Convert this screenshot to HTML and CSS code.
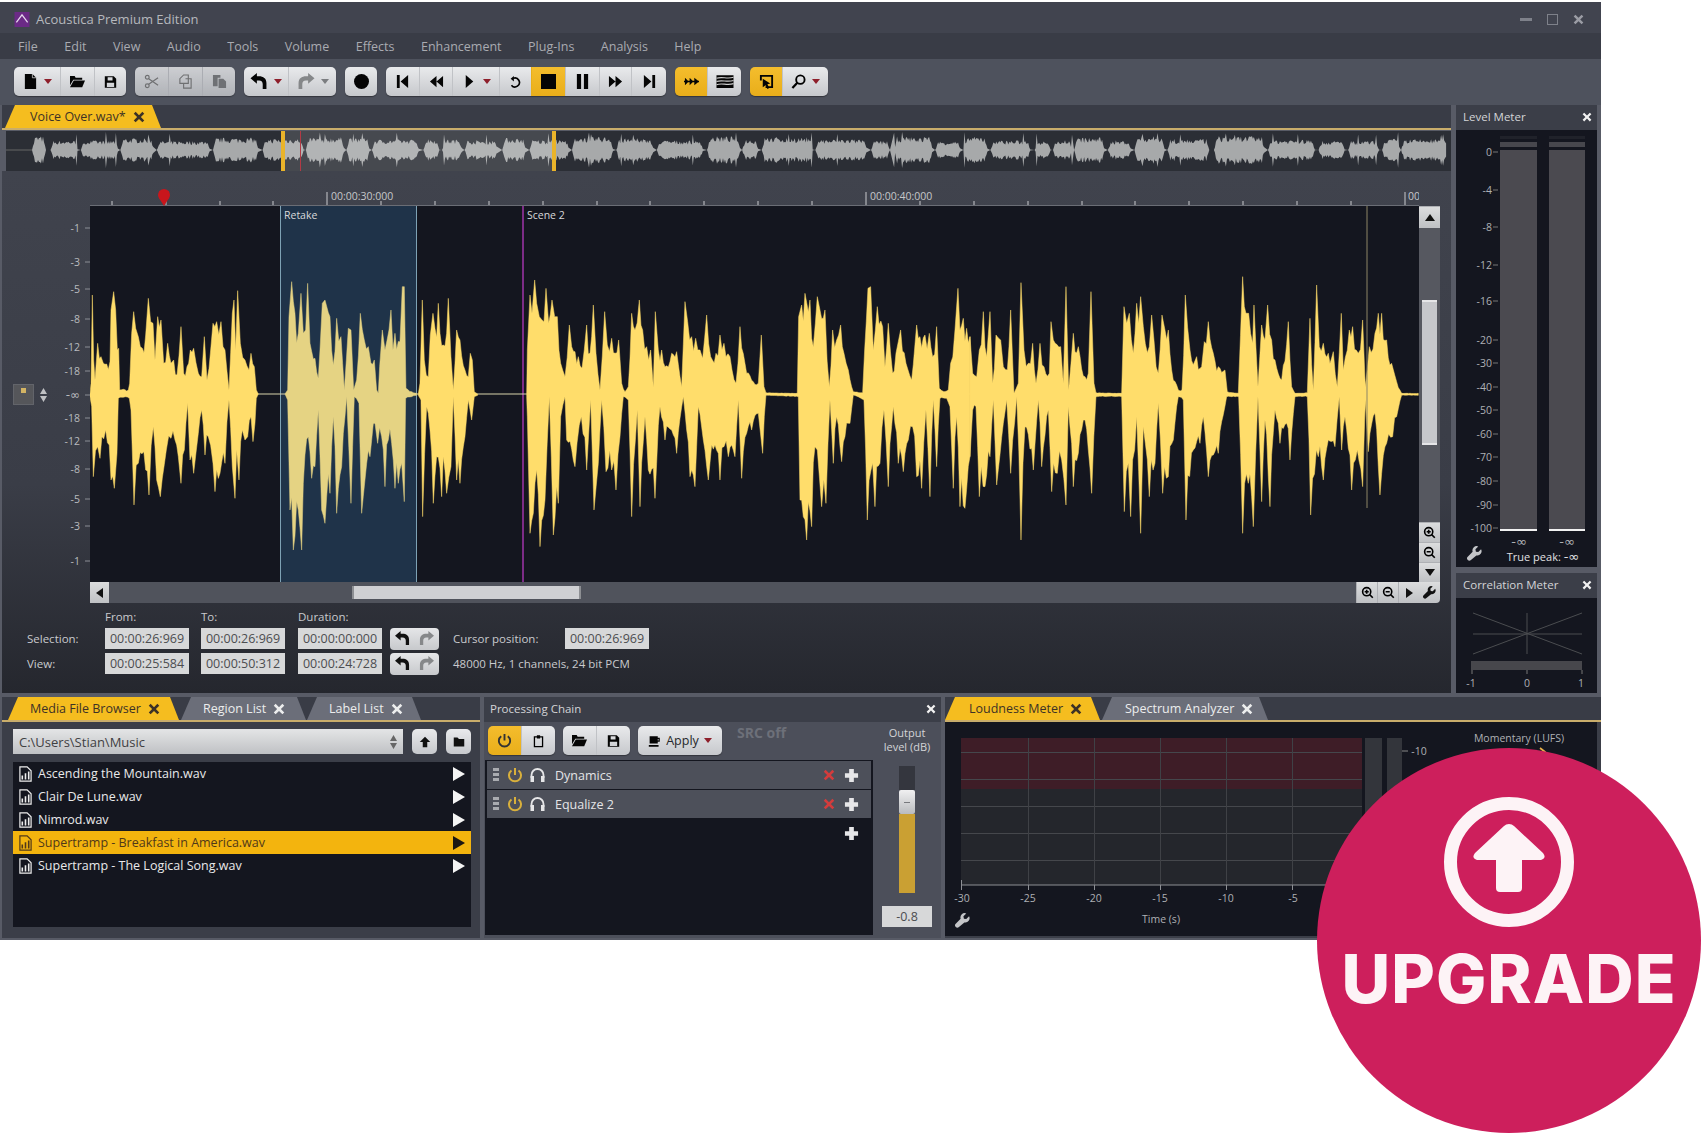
FILE: index.html
```html
<!DOCTYPE html>
<html lang="en">
<head>
  <meta charset="UTF-8">
  <title>Acoustica Premium Edition</title>
  <link rel="stylesheet" href="styles.css">
</head>
<body>

  <!-- icon set -->
  <svg class="defs" width="0" height="0">
    <symbol id="i-new" viewBox="0 0 16 16"><path d="M2 0h8l4 4v12H2z"/><path d="M10 0v4h4" fill="none" stroke="#ddd" stroke-width=".8"/></symbol>
    <symbol id="i-open" viewBox="0 0 16 16"><path d="M0 2h5l1 2h7v2H3.500L0 12z"/><path d="M4 7h12l-3 7H0z"/></symbol>
    <symbol id="i-save" viewBox="0 0 16 16"><path fill-rule="evenodd" d="M1 1h11l3 3v11H1zM4.500 2v4h6V2zM3.500 9v5h9V9z"/></symbol>
    <symbol id="i-cut" viewBox="0 0 16 16"><g fill="none" stroke="currentColor" stroke-width="1.300"><circle cx="3.500" cy="3.500" r="2"/><circle cx="3.500" cy="12.500" r="2"/><path d="M5 5l10 7M5 11l10-7"/></g></symbol>
    <symbol id="i-copy" viewBox="0 0 16 16"><g fill="none" stroke="currentColor" stroke-width="1.200"><path d="M6 1h5v9H2V5z"/><path d="M8 5h6v10H6v-5"/></g></symbol>
    <symbol id="i-paste" viewBox="0 0 16 16"><path d="M1 1h8v3H6v9H1z"/><path d="M7 5h5l3 3v7H7z"/></symbol>
    <symbol id="i-undo" viewBox="0 0 16 16"><path d="M6 0 0 5l6 5V7h2c2.500 0 3.500 1.500 3.500 3.500V15H15V9.500C15 5 12 3 8 3H6z"/></symbol>
    <symbol id="i-redo" viewBox="0 0 16 16"><path d="M10 0l6 5-6 5V7H8C5.500 7 4.500 8.500 4.500 10.500V15H1V9.500C1 5 4 3 8 3h2z"/></symbol>
    <symbol id="i-rec" viewBox="0 0 16 16"><circle cx="8" cy="8" r="8"/></symbol>
    <symbol id="i-start" viewBox="0 0 16 16"><path d="M2 1h3v14H2zM14 1v14L6 8z"/></symbol>
    <symbol id="i-rew" viewBox="0 0 16 16"><path d="M8 2v12L1 8zM15 2v12L8 8z"/></symbol>
    <symbol id="i-play" viewBox="0 0 16 16"><path d="M4 1l8 7-8 7z"/></symbol>
    <symbol id="i-loop" viewBox="0 0 16 16"><path d="M5 3.500A5.500 5.500 0 1 1 3 12" fill="none" stroke="#000" stroke-width="2"/><path d="M2 4l4-3.500v7z"/></symbol>
    <symbol id="i-stop" viewBox="0 0 16 16"><path d="M0 0h16v16H0z"/></symbol>
    <symbol id="i-pause" viewBox="0 0 16 16"><path d="M2 0h4.500v16H2zM9.500 0H14v16H9.500z"/></symbol>
    <symbol id="i-ff" viewBox="0 0 16 16"><path d="M1 2l7 6-7 6zM8 2l7 6-7 6z"/></symbol>
    <symbol id="i-end" viewBox="0 0 16 16"><path d="M2 1l8 7-8 7zM11 1h3v14h-3z"/></symbol>
    <symbol id="i-follow" viewBox="0 0 16 16"><path d="M0 7.300h16v1.400H0zM1 4l4 4-4 4zM6 4l4 4-4 4zM11 4l5 4-5 4z"/></symbol>
    <symbol id="i-wave" viewBox="0 0 16 16"><path d="M0 2h16v12H0z"/><path d="M0 5c5-2 10 1 16-1M0 8c5-2 10 1 16-1M0 11c5-2 10 1 16-1" fill="none" stroke="#ccc" stroke-width="1.100"/></symbol>
    <symbol id="i-select" viewBox="0 0 16 16"><path d="M1 1h14v14H7v-2h6V3H3v4H1z"/><path d="M4 5l8 5-3 1 2 4-2 1-2-4-3 2z"/></symbol>
    <symbol id="i-find" viewBox="0 0 16 16"><circle cx="10" cy="6" r="4.500" fill="none" stroke="#000" stroke-width="2"/><path d="M7 9l-5.500 6" stroke="#000" stroke-width="2.400"/></symbol>
    <symbol id="i-power" viewBox="0 0 16 16"><path d="M4.500 3.500a6 6 0 1 0 7 0" fill="none" stroke="currentColor" stroke-width="2"/><path d="M8 1v7" stroke="currentColor" stroke-width="2"/></symbol>
    <symbol id="i-clip" viewBox="0 0 16 16"><path d="M3 3h10v12H3z" fill="none" stroke="#000" stroke-width="1.600"/><path d="M6 1h4v4H6z"/></symbol>
    <symbol id="i-cup" viewBox="0 0 16 16"><path d="M2 2h10v2h2.500v5H12v2H2zM12 5.500v2h1v-2zM1 13h12v2H1z"/></symbol>
    <symbol id="i-phones" viewBox="0 0 16 16"><path d="M2 11V8a6 6 0 0 1 12 0v3" fill="none" stroke="currentColor" stroke-width="1.800"/><path d="M1 9h3.500v6H1zM11.500 9H15v6h-3.500z" fill="currentColor"/></symbol>
    <symbol id="i-wrench" viewBox="0 0 16 16"><path d="M15 3.500l-3 3-2.500-.5L9 3.500l3-3A4.500 4.500 0 0 0 6 6L.8 11.500a2.300 2.300 0 0 0 3.400 3.400L10 10a4.500 4.500 0 0 0 5-6.500z"/></symbol>
    <symbol id="i-zoomin" viewBox="0 0 16 16"><circle cx="7" cy="7" r="5" fill="none" stroke="#000" stroke-width="2"/><path d="M4.500 7h5M7 4.500v5M10.500 10.500l4 4" stroke="#000" stroke-width="2"/></symbol>
    <symbol id="i-zoomout" viewBox="0 0 16 16"><circle cx="7" cy="7" r="5" fill="none" stroke="#000" stroke-width="2"/><path d="M4.500 7h5M10.500 10.500l4 4" stroke="#000" stroke-width="2"/></symbol>
    <symbol id="i-up" viewBox="0 0 16 16"><path d="M8 1l7 7h-4v7H5V8H1z"/></symbol>
    <symbol id="i-folder" viewBox="0 0 16 16"><path d="M1 2h5l2 2h7v10H1z"/></symbol>
    <symbol id="i-updown" viewBox="0 0 7 14"><path d="M3.500 0 7 6H0zM0 8h7l-3.500 6z"/></symbol>
    <symbol id="i-x" viewBox="0 0 16 16"><path d="M1 3.500 3.500 1 8 5.500 12.500 1 15 3.500 10.500 8l4.500 4.500-2.500 2.500L8 10.500 3.500 15 1 12.500 5.500 8z"/></symbol>
    <symbol id="i-plus" viewBox="0 0 16 16"><path d="M5.500 1h5v4.500H15v5h-4.500V15h-5v-4.500H1v-5h4.500z"/></symbol>
    <symbol id="i-file" viewBox="0 0 16 20"><path d="M1 1h9l5 5v13H1z" fill="none" stroke="currentColor" stroke-width="1.500"/><path d="M3 12h2v5H3zM7 9h2v8H7zM11 7h2v10h-2z" fill="currentColor"/></symbol>
  </svg>

  <div class="window">

    <div class="titlebar">
      <svg class="logo" viewBox="0 0 16 16"><path d="M0 0h16v16H0z" fill="#6b2a86"/><path d="M2 11 8 3l6 8" fill="none" stroke="#e6d9ee" stroke-width="1.300"/></svg>
      <span class="app-name">Acoustica Premium Edition</span>
      <div class="window-btns">
        <span class="win-min"></span>
        <span class="win-max"></span>
        <svg class="win-close"><use href="#i-x"/></svg>
      </div>
    </div>

    <div class="menubar">
      <span>File</span><span>Edit</span><span>View</span><span>Audio</span><span>Tools</span><span>Volume</span><span>Effects</span><span>Enhancement</span><span>Plug-Ins</span><span>Analysis</span><span>Help</span>
    </div>

    <div class="toolbar">
      <div class="btn-group">
        <div class="tb w46"><svg class="ic"><use href="#i-new"/></svg><i class="drop"></i></div>
        <div class="tb w34"><svg class="ic"><use href="#i-open"/></svg></div>
        <div class="tb w32"><svg class="ic ic-sm"><use href="#i-save"/></svg></div>
      </div>
      <div class="btn-group off">
        <div class="tb w33"><svg class="ic"><use href="#i-cut"/></svg></div>
        <div class="tb w34"><svg class="ic"><use href="#i-copy"/></svg></div>
        <div class="tb w33"><svg class="ic"><use href="#i-paste"/></svg></div>
      </div>
      <div class="btn-group">
        <div class="tb w44"><svg class="ic ic-lg"><use href="#i-undo"/></svg><i class="drop"></i></div>
        <div class="tb w48 grey"><svg class="ic ic-lg"><use href="#i-redo"/></svg><i class="drop"></i></div>
      </div>
      <div class="btn-group">
        <div class="tb w32"><svg class="ic"><use href="#i-rec"/></svg></div>
      </div>
      <div class="btn-group">
        <div class="tb w33"><svg class="ic"><use href="#i-start"/></svg></div>
        <div class="tb w33"><svg class="ic"><use href="#i-rew"/></svg></div>
        <div class="tb w47"><svg class="ic"><use href="#i-play"/></svg><i class="drop"></i></div>
        <div class="tb w32"><svg class="ic ic-sm"><use href="#i-loop"/></svg></div>
        <div class="tb w34 on"><svg class="ic"><use href="#i-stop"/></svg></div>
        <div class="tb w34"><svg class="ic"><use href="#i-pause"/></svg></div>
        <div class="tb w32"><svg class="ic"><use href="#i-ff"/></svg></div>
        <div class="tb w35"><svg class="ic"><use href="#i-end"/></svg></div>
      </div>
      <div class="btn-group">
        <div class="tb w32 on"><svg class="ic"><use href="#i-follow"/></svg></div>
        <div class="tb w34"><svg class="ic ic-lg"><use href="#i-wave"/></svg></div>
      </div>
      <div class="btn-group">
        <div class="tb w32 on"><svg class="ic"><use href="#i-select"/></svg></div>
        <div class="tb w46"><svg class="ic"><use href="#i-find"/></svg><i class="drop"></i></div>
      </div>
    </div>

    <div class="workspace">
      <div class="main">
        <div class="tabrow">
          <div class="tab active tab-voice">Voice Over.wav* <svg class="tab-x"><use href="#i-x"/></svg></div>
        </div>

        <svg class="overview" viewBox="6 131 1445 40">
          <path d="M6 150h26" stroke="#666" fill="none"/>
          <path id="overview-wave" fill="#a7a9aa"/>
          <rect x="284" y="131" width="270" height="40" fill="#fff" opacity=".13"/>
          <rect x="300" y="131" width="1" height="40" fill="#b23a45"/>
          <rect x="281" y="131" width="4" height="40" fill="#eab42a"/>
          <rect x="552" y="131" width="4" height="40" fill="#eab42a"/>
        </svg>

        <div class="editor">
          <div class="editor-grid">
            <div class="corner-top"></div>
            <svg class="ruler" viewBox="90 171 1329 35">
              <path d="M112 201v5M166 201v5M220 201v5M273 201v5M327 192v14M381 201v5M435 201v5M489 201v5M543 201v5M597 201v5M650 201v5M704 201v5M758 201v5M812 201v5M866 192v14M920 201v5M974 201v5M1028 201v5M1082 201v5M1135 201v5M1189 201v5M1243 201v5M1297 201v5M1351 201v5M1405 192v14" stroke="#c9cace" fill="none"/>
              <path d="M90 205.500h1329" stroke="#6a6d75"/>
              <path d="M159 191h10v7l-5 8-5-8z" fill="#c8161c"/>
              <circle cx="164" cy="195" r="6" fill="#c8161c"/>
              <text x="331" y="200">00:00:30:000</text>
              <text x="870" y="200">00:00:40:000</text>
              <text x="1408" y="200">00</text>
            </svg>
            <div class="corner-top"></div>

            <div class="axis">
              <div class="channel-tools">
                <span class="channel-box"><i></i></span>
                <svg class="channel-arrows"><use href="#i-updown"/></svg>
              </div>
              <svg class="axis-labels" viewBox="2 206 88 376">
                <path d="M85 228h5M85 262h5M85 289h5M85 319h5M85 347h5M85 371h5M85 395h5M85 418h5M85 441h5M85 469h5M85 499h5M85 526h5M85 561h5" stroke="#8b8e95"/>
                <text x="80" y="232">-1</text>
                <text x="80" y="266">-3</text>
                <text x="80" y="293">-5</text>
                <text x="80" y="323">-8</text>
                <text x="80" y="351">-12</text>
                <text x="80" y="375">-18</text>
                <text class="inf" x="80" y="399">-∞</text>
                <text x="80" y="422">-18</text>
                <text x="80" y="445">-12</text>
                <text x="80" y="473">-8</text>
                <text x="80" y="503">-5</text>
                <text x="80" y="530">-3</text>
                <text x="80" y="565">-1</text>
              </svg>
            </div>

            <svg class="plot" viewBox="90 206 1329 376">
              <rect x="280" y="206" width="137" height="376" fill="#1f3349"/>
              <path d="M280.500 206v376M416.500 206v376" stroke="#7ea2b4"/>
              <rect x="522" y="206" width="2" height="376" fill="#7c2c86"/>
              <path d="M90 394h1318" stroke="#d8d3ac" stroke-width="1.200"/>
              <g class="wave" transform="translate(85 250) scale(.3333)">
                <polygon points="15,432 18,400 22,135 26,330 30,390 38,280 48,320 55,340 75,335 78,180 86,125 92,180 97,300 101,295 104,420 115,418 130,420 134,400 140,250 146,185 152,235 160,260 172,295 182,255 190,145 197,215 204,220 210,330 218,200 228,210 236,340 248,280 258,340 266,330 276,375 288,230 296,370 306,350 316,300 326,295 340,370 350,380 358,260 366,390 384,220 395,215 408,215 420,300 432,420 442,190 447,150 452,300 458,122 466,280 480,330 492,360 498,310 508,350 514,420 520,432 514,445 510,520 504,575 498,500 488,560 480,570 472,540 462,690 455,600 450,745 442,650 432,450 420,640 405,670 390,725 384,640 370,560 360,615 350,480 340,550 326,670 315,630 308,460 298,600 288,700 280,620 270,570 258,565 244,600 226,740 215,690 205,530 192,735 182,660 160,640 147,765 138,480 133,445 115,442 100,445 96,610 88,715 78,690 62,540 45,625 38,590 25,680 20,470 15,440"/>
                <polygon class="dim" points="600,432 608,420 612,200 620,95 630,190 640,250 648,130 655,250 662,240 668,100 675,280 690,325 700,385 705,300 712,160 720,150 735,200 745,345 755,205 768,260 778,420 790,235 798,240 806,420 815,390 826,190 838,270 850,290 858,340 868,330 875,420 880,430 884,350 892,240 900,300 912,240 918,180 924,300 930,250 945,275 952,110 958,110 963,415 980,425 995,430 995,436 980,440 962,445 958,755 950,640 940,700 930,715 920,580 910,570 900,710 890,560 878,580 870,520 855,620 840,690 830,790 822,460 808,440 798,760 785,440 770,650 755,790 745,500 735,730 720,820 710,780 700,480 690,650 680,685 670,560 655,700 650,900 640,780 625,900 615,780 608,450"/>
                <polygon points="1000,432 1005,400 1012,150 1018,330 1030,380 1036,255 1044,190 1050,235 1060,160 1065,250 1085,250 1090,145 1098,320 1105,420 1115,240 1125,270 1140,360 1150,380 1156,310 1162,330 1168,425 1178,432 1178,436 1168,440 1160,510 1150,450 1140,560 1125,700 1115,690 1105,440 1098,650 1085,730 1075,620 1070,740 1055,620 1045,760 1035,540 1025,470 1013,800 1008,450 1000,436"/>
              </g>
              <g class="wave" transform="translate(520 250) scale(.3333)">
                <polygon points="20,432 22,300 30,135 36,190 44,90 50,160 58,200 66,210 78,115 86,220 96,150 104,200 112,200 122,340 135,380 148,225 155,290 175,320 186,355 200,225 210,310 220,165 228,310 240,420 254,185 262,285 275,265 296,270 305,400 315,425 325,410 335,190 345,240 358,150 368,240 380,290 392,300 400,410 406,185 415,300 425,300 435,350 455,310 470,305 485,410 495,155 503,215 515,260 527,265 540,300 548,325 560,195 572,320 588,310 600,255 612,280 630,320 648,400 660,230 675,340 700,395 715,400 724,255 732,410 738,428 832,430 836,200 845,165 855,130 870,150 880,290 892,140 900,180 915,180 928,410 938,240 950,270 962,225 972,310 985,360 1000,425 1028,428 1034,300 1044,115 1052,110 1060,300 1072,170 1088,230 1095,350 1105,220 1118,370 1128,310 1142,240 1158,340 1175,390 1190,225 1200,260 1215,255 1228,250 1238,320 1250,230 1258,415 1272,425 1285,420 1292,340 1305,240 1314,115 1320,240 1330,205 1350,260 1350,620 1335,775 1320,770 1310,500 1300,715 1290,470 1280,445 1260,445 1250,650 1240,450 1230,740 1218,480 1205,715 1190,680 1178,530 1165,570 1150,665 1135,640 1120,470 1105,710 1092,480 1080,640 1065,770 1058,640 1042,810 1032,450 1000,435 990,520 975,560 965,635 950,500 940,640 930,450 918,760 905,770 892,600 885,590 875,830 860,870 850,800 840,750 835,440 738,436 728,610 715,490 695,540 680,550 665,685 655,450 645,620 625,620 612,590 600,690 585,585 565,690 550,570 535,470 525,710 510,680 500,540 490,440 470,610 455,540 435,570 420,470 405,745 385,660 375,500 360,770 352,480 335,800 325,450 310,440 300,560 288,720 275,660 258,665 245,450 235,640 222,780 212,450 200,660 184,500 165,650 140,570 135,440 122,500 115,760 100,855 88,440 75,750 60,890 50,660 40,790 30,850 22,500 20,440"/>
              </g>
              <g class="wave" transform="translate(970 250) scale(.3333)">
                <polygon points="0,260 8,370 20,380 28,300 40,185 50,320 60,185 68,400 78,255 92,270 100,350 112,360 122,180 132,430 145,400 153,98 162,300 175,340 188,280 198,400 210,280 222,350 238,370 243,215 250,270 272,290 280,400 288,110 296,420 310,250 325,290 345,380 355,370 363,125 372,400 378,428 455,430 462,170 470,220 478,190 490,310 500,160 512,140 520,230 538,290 545,195 552,270 565,370 576,195 585,240 595,240 605,360 625,420 636,420 646,135 660,300 680,320 695,350 703,275 715,215 730,310 745,350 765,360 772,425 805,430 818,80 828,190 836,190 848,280 852,165 864,410 875,225 885,270 893,165 905,270 915,330 935,390 955,215 965,410 975,430 1012,428 1020,205 1030,420 1040,105 1048,290 1060,280 1075,310 1090,305 1102,410 1114,190 1120,360 1138,240 1148,230 1165,310 1178,210 1186,410 1198,290 1215,250 1225,190 1235,190 1250,270 1265,340 1280,395 1295,430 1345,430 1345,436 1295,436 1280,500 1268,560 1250,580 1230,735 1215,490 1195,605 1186,450 1178,710 1162,600 1145,720 1125,500 1115,600 1108,440 1095,590 1075,570 1060,690 1045,620 1022,795 1012,440 975,440 960,630 950,520 930,580 915,480 900,770 885,510 875,755 864,440 850,830 835,700 818,850 806,440 770,440 745,610 715,680 700,500 690,580 670,600 648,810 640,450 625,440 610,570 595,680 578,730 565,460 555,640 538,740 520,530 512,850 500,500 482,800 475,640 463,785 455,440 378,440 365,730 345,510 325,610 310,710 295,470 288,765 275,630 262,670 245,725 235,480 215,650 205,450 190,660 165,530 153,870 140,440 122,670 110,450 80,705 70,450 60,620 45,710 28,740 18,470 8,480 0,620"/>
              </g>
              <path d="M1367 206v302" stroke="#8d8567"/>
              <text x="284" y="219">Retake</text>
              <text x="527" y="219">Scene 2</text>
            </svg>

            <div class="vscroll">
              <div class="sb-btn sb-first"><i class="tri-up"></i></div>
              <div class="vtrack"><div class="vthumb"></div></div>
              <div class="sb-btn"><svg class="ic-zoom"><use href="#i-zoomin"/></svg></div>
              <div class="sb-btn"><svg class="ic-zoom"><use href="#i-zoomout"/></svg></div>
              <div class="sb-btn"><i class="tri-down"></i></div>
            </div>

            <div class="corner-bottom"></div>

            <div class="hscroll">
              <div class="sb-btn sb-left"><i class="tri-left"></i></div>
              <div class="htrack"><div class="hthumb"></div></div>
              <div class="sb-btn sb-h"><svg class="ic-zoom"><use href="#i-zoomin"/></svg></div>
              <div class="sb-btn sb-h"><svg class="ic-zoom"><use href="#i-zoomout"/></svg></div>
              <div class="sb-btn sb-h"><i class="tri-right"></i></div>
            </div>
            <div class="sb-btn sb-corner"><svg class="ic-zoom"><use href="#i-wrench"/></svg></div>
          </div>

          <div class="selection">
            <span></span>
            <span>From:</span>
            <span>To:</span>
            <span class="span-rest">Duration:</span>

            <span>Selection:</span>
            <span class="field">00:00:26:969</span>
            <span class="field">00:00:26:969</span>
            <span class="field">00:00:00:000</span>
            <div class="mini-btns"><div class="mini"><svg><use href="#i-undo"/></svg></div><div class="mini grey"><svg><use href="#i-redo"/></svg></div></div>
            <span>Cursor position:</span>
            <span class="field">00:00:26:969</span>

            <span>View:</span>
            <span class="field">00:00:25:584</span>
            <span class="field">00:00:50:312</span>
            <span class="field">00:00:24:728</span>
            <div class="mini-btns"><div class="mini"><svg><use href="#i-undo"/></svg></div><div class="mini grey"><svg><use href="#i-redo"/></svg></div></div>
            <span class="format">48000 Hz, 1 channels, 24 bit PCM</span>
          </div>
        </div>
      </div>

      <div class="side">
        <div class="side-head">Level Meter <svg class="head-x"><use href="#i-x"/></svg></div>
        <svg class="level" viewBox="1456 130 141 437">
          <rect x="1500" y="136" width="37" height="3" fill="#20222a"/>
          <rect x="1549" y="136" width="36" height="3" fill="#20222a"/>
          <rect x="1500" y="142" width="37" height="5" fill="#47474d"/>
          <rect x="1549" y="142" width="36" height="5" fill="#47474d"/>
          <rect x="1500" y="150" width="37" height="380" fill="#4b4a50"/>
          <rect x="1549" y="150" width="36" height="380" fill="#4b4a50"/>
          <path d="M1500 530h37M1549 530h36" stroke="#f2f2f2" stroke-width="2"/>
          <path d="M1493 152h5M1493 190h5M1493 227h5M1493 265h5M1493 301h5M1493 340h5M1493 363h5M1493 387h5M1493 410h5M1493 434h5M1493 457h5M1493 481h5M1493 505h5M1493 528h5" stroke="#777"/>
          <g class="level-scale">
            <text x="1492" y="156">0</text>
            <text x="1492" y="194">-4</text>
            <text x="1492" y="231">-8</text>
            <text x="1492" y="269">-12</text>
            <text x="1492" y="305">-16</text>
            <text x="1492" y="344">-20</text>
            <text x="1492" y="367">-30</text>
            <text x="1492" y="391">-40</text>
            <text x="1492" y="414">-50</text>
            <text x="1492" y="438">-60</text>
            <text x="1492" y="461">-70</text>
            <text x="1492" y="485">-80</text>
            <text x="1492" y="509">-90</text>
            <text x="1492" y="532">-100</text>
          </g>
          <text class="inf mid" x="1519" y="546">-∞</text>
          <text class="inf mid" x="1567" y="546">-∞</text>
          <text class="peak" x="1543" y="561">True peak: <tspan class="inf">-∞</tspan></text>
          <use href="#i-wrench" x="1467" y="546" width="15" height="15" fill="#c4c5c8"/>
        </svg>
        <div class="side-sash"></div>
        <div class="side-head">Correlation Meter <svg class="head-x"><use href="#i-x"/></svg></div>
        <svg class="correlation" viewBox="1456 598 141 95">
          <path d="M1473 613l109 41M1473 654l109-41M1473 634h109M1527 613v41" stroke="#4b4d50" fill="none"/>
          <rect x="1471" y="661" width="111" height="9" fill="#47474c"/>
          <path d="M1472 670v4M1527 670v4M1582 670v4" stroke="#777"/>
          <text x="1471" y="687">-1</text>
          <text x="1527" y="687">0</text>
          <text x="1581" y="687">1</text>
        </svg>
      </div>
    </div>

    <div class="dock">
      <div class="panel panel-files">
        <div class="tabrow tabrow-dock">
          <div class="tab active tab-media">Media File Browser <svg class="tab-x"><use href="#i-x"/></svg></div>
          <div class="tab tab-region">Region List <svg class="tab-x"><use href="#i-x"/></svg></div>
          <div class="tab tab-label">Label List <svg class="tab-x"><use href="#i-x"/></svg></div>
        </div>
        <div class="path-row">
          <div class="path-box"><span>C:\Users\Stian\Music</span><svg class="updown"><use href="#i-updown"/></svg></div>
          <div class="square"><svg><use href="#i-up"/></svg></div>
          <div class="square"><svg><use href="#i-folder"/></svg></div>
        </div>
        <div class="file-list">
          <div class="file"><svg class="file-ic"><use href="#i-file"/></svg><span>Ascending the Mountain.wav</span><i class="file-play"></i></div>
          <div class="file"><svg class="file-ic"><use href="#i-file"/></svg><span>Clair De Lune.wav</span><i class="file-play"></i></div>
          <div class="file"><svg class="file-ic"><use href="#i-file"/></svg><span>Nimrod.wav</span><i class="file-play"></i></div>
          <div class="file selected"><svg class="file-ic"><use href="#i-file"/></svg><span>Supertramp - Breakfast in America.wav</span><i class="file-play"></i></div>
          <div class="file"><svg class="file-ic"><use href="#i-file"/></svg><span>Supertramp - The Logical Song.wav</span><i class="file-play"></i></div>
        </div>
      </div>

      <div class="panel panel-chain">
        <div class="chain-head">Processing Chain <svg class="head-x"><use href="#i-x"/></svg></div>
        <div class="chain-body">
          <div class="chain-left">
            <div class="chain-tools">
              <div class="btn-group">
                <div class="tb w33 on"><svg class="ic ic-pow"><use href="#i-power"/></svg></div>
                <div class="tb w34"><svg class="ic ic-sm"><use href="#i-clip"/></svg></div>
              </div>
              <div class="btn-group">
                <div class="tb w33"><svg class="ic"><use href="#i-open"/></svg></div>
                <div class="tb w34"><svg class="ic ic-sm"><use href="#i-save"/></svg></div>
              </div>
              <div class="btn-group">
                <div class="tb apply"><svg class="ic ic-sm"><use href="#i-cup"/></svg><span>Apply</span><i class="drop"></i></div>
              </div>
              <span class="src">SRC off</span>
            </div>
            <div class="chain-list">
              <div class="effect"><i class="grip"></i><svg class="fx-pow"><use href="#i-power"/></svg><svg class="fx-phones"><use href="#i-phones"/></svg><span>Dynamics</span><svg class="fx-del"><use href="#i-x"/></svg><svg class="fx-add"><use href="#i-plus"/></svg></div>
              <div class="effect"><i class="grip"></i><svg class="fx-pow"><use href="#i-power"/></svg><svg class="fx-phones"><use href="#i-phones"/></svg><span>Equalize 2</span><svg class="fx-del"><use href="#i-x"/></svg><svg class="fx-add"><use href="#i-plus"/></svg></div>
              <div class="effect-empty"><svg class="fx-add"><use href="#i-plus"/></svg></div>
            </div>
          </div>
          <div class="chain-right">
            <div class="output-label">Output<br>level (dB)</div>
            <div class="fader"><div class="fader-off"></div><div class="fader-knob"><i></i></div><div class="fader-on"></div></div>
            <div class="fader-value">-0.8</div>
          </div>
        </div>
      </div>

      <div class="panel panel-loud">
        <div class="tabrow tabrow-dock">
          <div class="tab active tab-loud">Loudness Meter <svg class="tab-x"><use href="#i-x"/></svg></div>
          <div class="tab tab-spectrum">Spectrum Analyzer <svg class="tab-x"><use href="#i-x"/></svg></div>
        </div>
        <svg class="loudness" viewBox="945 722 652 214">
          <rect x="961" y="738" width="401" height="147" fill="#24262c"/>
          <rect x="961" y="738" width="401" height="51" fill="#3e1d27"/>
          <path d="M961 752.500h401M961 779.500h401M961 806.500h401M961 833.500h401M961 860.500h401" stroke="#45474c" fill="none"/>
          <path d="M1028.500 738v147M1094.500 738v147M1160.500 738v147M1226.500 738v147M1292.500 738v147" stroke="#3f4146" fill="none"/>
          <path d="M961 885h401M961.500 880v10M1028.500 885v5M1094.500 885v5M1160.500 885v5M1226.500 885v5M1292.500 885v5" stroke="#8d8f94" fill="none"/>
          <rect x="1365" y="738" width="17" height="200" fill="#33353b"/>
          <rect x="1387" y="738" width="15" height="200" fill="#33353b"/>
          <path d="M1402 751h6" stroke="#888"/>
          <text x="962" y="902">-30</text>
          <text x="1028" y="902">-25</text>
          <text x="1094" y="902">-20</text>
          <text x="1160" y="902">-15</text>
          <text x="1226" y="902">-10</text>
          <text x="1293" y="902">-5</text>
          <text x="1161" y="923">Time (s)</text>
          <text x="1419" y="755">-10</text>
          <text x="1519" y="742">Momentary (LUFS)</text>
          <path d="M1520 750q-6 1-8 5M1540 748q5 3 8 8" stroke="#e8b04a" stroke-width="2" fill="none"/>
          <use href="#i-wrench" x="955" y="913" width="15" height="15" fill="#c4c5c8"/>
        </svg>
      </div>
    </div>
  </div>

  <div class="upgrade">
    <svg class="upgrade-icon" viewBox="0 0 130 130">
      <circle cx="65" cy="65" r="58.500" fill="none" stroke="#fdf3f6" stroke-width="13"/>
      <path d="M65 27q3 0 5 2l29 27q4 5-2 7H78v28q0 4-4 4H56q-4 0-4-4V63H33q-6-2-2-7l29-27q2-2 5-2z" fill="#fdf3f6"/>
    </svg>
    <div class="upgrade-text">UPGRADE</div>
  </div>

  <script src="script.js"></script>
</body>
</html>
```

FILE: styles.css
```css
* {
  box-sizing: border-box;
}

body {
  margin: 0;
  height: 1136px;
  overflow: hidden;
  position: relative;
  background: #fff;
  font-family: "Open Sans", "Liberation Sans", sans-serif;
  font-size: 12.5px;
  color: #d3d4d7;
}

.defs {
  position: absolute;
}

.inf {
  font-family: "DejaVu Sans", sans-serif;
  font-size: 13px;
}

.window {
  width: 1601px;
  height: 938px;
  margin-top: 2px;
  padding-left: 2px;
  background: #585b66;
  display: flex;
  flex-direction: column;
  overflow: hidden;
}

/* Title and menu */
.titlebar {
  height: 31px;
  flex: none;
  margin-left: -2px;
  padding: 3px 14px 0;
  display: flex;
  align-items: center;
  background: #41444f;
  color: #b6b8bd;
  font-size: 13px;
}

.logo {
  width: 16px;
  height: 15px;
  margin: 0 6px 0 0;
}

.window-btns {
  margin-left: auto;
  display: flex;
  align-items: center;
  gap: 15px;
  padding-right: 3px;
}

.win-min {
  width: 12px;
  height: 3px;
  background: #7e818a;
}

.win-max {
  width: 11px;
  height: 11px;
  border: 1px solid #7e818a;
}

.win-close {
  width: 11px;
  height: 11px;
  fill: #9a9ca4;
}

.menubar {
  height: 26px;
  flex: none;
  margin-left: -2px;
  padding-left: 18px;
  display: flex;
  align-items: center;
  gap: 26.500px;
  background: #393c46;
  color: #a9abb1;
}

/* Toolbar */
.toolbar {
  height: 46px;
  flex: none;
  margin-left: -2px;
  padding: 8px 0 0 14px;
  display: flex;
  gap: 9px;
  background: #4e525d;
}

.btn-group {
  height: 29px;
  display: flex;
  border-radius: 5px;
  overflow: hidden;
  box-shadow: 0 1px 1px #33353c;
}

.btn-group.off {
  opacity: .82;
}

.tb {
  height: 100%;
  display: flex;
  align-items: center;
  justify-content: center;
  gap: 6px;
  background: linear-gradient(#e9eaec, #c6c8cc);
  border-left: 1px solid #c0c2c6;
  color: #777;
}

.tb:first-child {
  border-left: none;
}

.tb.on {
  background: linear-gradient(#f4bd2d, #e9ae1a);
  border-color: #e9ae1a;
  color: #333;
}

.tb.grey .ic {
  fill: #858789;
}

.tb.grey .drop {
  border-top-color: #7b7d80;
}

.w32 { width: 32px; }
.w33 { width: 33px; }
.w34 { width: 34px; }
.w35 { width: 35px; }
.w44 { width: 44px; }
.w46 { width: 46px; }
.w47 { width: 47px; }
.w48 { width: 48px; }

.ic {
  width: 15px;
  height: 15px;
  fill: #050505;
}

.ic-sm {
  width: 13px;
  height: 14px;
}

.ic-lg {
  width: 18px;
  height: 17px;
}

.off .ic {
  fill: #77797b;
}

.drop {
  width: 0;
  height: 0;
  border-left: 4px solid transparent;
  border-right: 4px solid transparent;
  border-top: 5px solid #8e1f2b;
}

/* Workspace */
.workspace {
  height: 588px;
  flex: none;
  display: flex;
  gap: 5px;
}

.main {
  width: 1449px;
  flex: none;
  display: flex;
  flex-direction: column;
}

.tabrow {
  height: 25px;
  flex: none;
  padding-left: 3px;
  display: flex;
  background: #393c46;
  border-bottom: 2px solid #c9ad6b;
}

.tab {
  height: 23px;
  display: flex;
  align-items: center;
  gap: 7px;
  clip-path: polygon(10px 0, calc(100% - 9px) 0, 100% 100%, 0 100%);
  background: #6b6e79;
  color: #eceded;
  white-space: nowrap;
}

.tab.active {
  background: #f5bd1f;
  color: #3d3226;
}

.tab-x {
  width: 12px;
  height: 12px;
  fill: currentColor;
}

.tab-voice {
  width: 156px;
  padding-left: 25px;
}

.overview {
  display: block;
  width: 1445px;
  height: 40px;
  margin: 1px 0 0 4px;
  flex: none;
  background: #2b2e35;
}

.editor {
  flex: 1;
  background: linear-gradient(#40434d, #3a3d47 60%, #25272e);
  display: flex;
  flex-direction: column;
}

.editor-grid {
  display: grid;
  grid-template-columns: 88px 1329px 21px;
  grid-template-rows: 35px 376px 21px;
}

.ruler {
  display: block;
  width: 1329px;
  height: 35px;
}

.ruler text {
  font-size: 10.5px;
  fill: #c6c7ca;
}

.axis {
  position: relative;
}

.axis-labels {
  display: block;
  width: 88px;
  height: 376px;
}

.axis-labels text {
  font-size: 10.5px;
  fill: #b9bbbf;
  text-anchor: end;
}

.axis-labels .inf {
  font-size: 12px;
}

.channel-tools {
  position: absolute;
  left: 11px;
  top: 178px;
  display: flex;
  align-items: center;
  gap: 6px;
}

.channel-box {
  width: 21px;
  height: 21px;
  background: #55565a;
  border: 1px solid #62646a;
  display: flex;
  justify-content: center;
}

.channel-box i {
  width: 5px;
  height: 5px;
  margin-top: 3px;
  background: #d3b464;
}

.channel-arrows {
  width: 7px;
  height: 14px;
  fill: #bfc0c3;
}

.plot {
  display: block;
  width: 1329px;
  height: 376px;
  background: #14161f;
}

.plot text {
  font-size: 10.5px;
  fill: #d7d8da;
}

.wave polygon {
  fill: #ffdd6b;
  stroke: #ffdd6b;
  stroke-width: 1.5px;
  stroke-linejoin: round;
}

.wave .dim {
  fill: #e5d383;
  stroke: #e5d383;
}

/* Scrollbars */
.vscroll {
  display: flex;
  flex-direction: column;
}

.sb-btn {
  flex: none;
  height: 20px;
  display: flex;
  align-items: center;
  justify-content: center;
  background: linear-gradient(#dcddde, #bfc1c4);
  border-top: 1px solid #aeb0b4;
}

.sb-first {
  height: 22px;
}

.vtrack {
  flex: 1;
  padding: 72px 3px 0;
  background: #565860;
}

.vthumb {
  height: 145px;
  background: #c6c7cb;
  border-top: 2px solid #e6e6e8;
  border-bottom: 2px solid #e6e6e8;
}

.hscroll {
  display: flex;
  background: #50535c;
}

.sb-left {
  width: 19px;
  height: 21px;
  border-top: none;
}

.htrack {
  flex: 1;
  padding: 4px 0 0 243px;
}

.hthumb {
  width: 229px;
  height: 13px;
  background: #cfd0d3;
  border-left: 2px solid #8d8f93;
  border-right: 2px solid #8d8f93;
}

.sb-h {
  width: 21px;
  height: 21px;
  border-top: none;
  border-left: 1px solid #aeb0b4;
}

.sb-corner {
  height: 21px;
  border-top: none;
  border-radius: 0 0 4px 0;
}

.ic-zoom {
  width: 13px;
  height: 13px;
  fill: #111;
}

.tri-up, .tri-down, .tri-left, .tri-right {
  width: 0;
  height: 0;
  border: 5px solid transparent;
}

.tri-up {
  border-top: none;
  border-bottom: 7px solid #111;
}

.tri-down {
  border-bottom: none;
  border-top: 7px solid #111;
}

.tri-left {
  border-left: none;
  border-right: 7px solid #111;
}

.tri-right {
  border-right: none;
  border-left: 7px solid #111;
}

/* Selection fields */
.selection {
  padding: 5px 0 0 25px;
  display: grid;
  grid-template-columns: 78px 96px 97px 92px 63px 112px 84px;
  grid-template-rows: 16px 21px 21px;
  row-gap: 4px;
  align-items: center;
  font-size: 11.5px;
  color: #c9cace;
}

.span-rest {
  grid-column: span 4;
}

.field {
  width: 84px;
  height: 21px;
  line-height: 21px;
  text-align: center;
  background: #d7d8d9;
  color: #4c4d50;
  font-size: 12.5px;
}

.mini-btns {
  width: 49px;
  height: 22px;
  display: flex;
  border-radius: 4px;
  overflow: hidden;
}

.mini {
  flex: 1;
  display: flex;
  align-items: center;
  justify-content: center;
  background: linear-gradient(#e5e6e8, #c7c9cc);
}

.mini svg {
  width: 15px;
  height: 15px;
  fill: #111;
}

.mini.grey svg {
  fill: #86888a;
}

.format {
  grid-column: span 2;
}

/* Side meters */
.side {
  width: 141px;
  flex: none;
  display: flex;
  flex-direction: column;
}

.side-head {
  height: 25px;
  flex: none;
  padding: 0 5px 2px 7px;
  display: flex;
  align-items: center;
  justify-content: space-between;
  background: #3b3e48;
  font-size: 11.5px;
}

.head-x {
  width: 10px;
  height: 10px;
  fill: #f2f2f2;
}

.level {
  display: block;
  width: 141px;
  height: 437px;
  background: #14161f;
}

.level text, .correlation text {
  font-size: 10.5px;
  fill: #aeb0b4;
  text-anchor: end;
}

.level .mid {
  font-size: 13px;
  text-anchor: middle;
}

.level .peak {
  font-size: 11px;
  fill: #e0e0e2;
  text-anchor: middle;
}

.level .peak .inf {
  font-size: 13px;
}

.side-sash {
  height: 6px;
  flex: none;
}

.correlation {
  display: block;
  width: 141px;
  height: 95px;
  background: #14161f;
}

.correlation text {
  text-anchor: middle;
}

/* Bottom dock */
.dock {
  height: 245px;
  flex: none;
  padding-top: 4px;
  display: flex;
  gap: 4px;
  background: #585b66;
}

.panel {
  background: #3b3e48;
  display: flex;
  flex-direction: column;
}

.panel-files {
  width: 478px;
  flex: none;
}

.tabrow-dock {
  height: 25px;
  gap: 0;
  padding-left: 6px;
}

.tab-media {
  width: 171px;
  padding-left: 22px;
}

.tab-region {
  width: 125px;
  padding-left: 22px;
  margin-left: 2px;
}

.tab-label {
  width: 114px;
  padding-left: 22px;
  margin-left: 1px;
}

.path-row {
  padding: 7px 9px 0 11px;
  display: flex;
  gap: 9px;
}

.path-box {
  width: 391px;
  height: 25px;
  padding: 0 6px;
  display: flex;
  align-items: center;
  justify-content: space-between;
  background: linear-gradient(#e4e5e6, #bfc1c4);
  color: #3f4043;
  font-size: 13px;
}

.updown {
  width: 7px;
  height: 14px;
  fill: #666;
}

.square {
  width: 25px;
  height: 25px;
  display: flex;
  align-items: center;
  justify-content: center;
  border-radius: 5px;
  background: linear-gradient(#e9eaec, #c6c8cc);
}

.square svg {
  width: 12px;
  height: 12px;
  fill: #111;
}

.file-list {
  height: 165px;
  margin: 8px 9px 0 11px;
  background: #14161f;
  color: #e9e9ea;
}

.file {
  height: 23px;
  padding: 0 6px;
  display: flex;
  align-items: center;
  gap: 6px;
}

.file-ic {
  width: 13px;
  height: 16px;
  color: #eee;
}

.file-play {
  width: 0;
  height: 0;
  margin-left: auto;
  border-top: 7px solid transparent;
  border-bottom: 7px solid transparent;
  border-left: 12px solid #f4f4f4;
}

.file.selected {
  background: #f3b40e;
  color: #50381a;
}

.file.selected .file-ic {
  color: #50381a;
}

.file.selected .file-play {
  border-left-color: #1c1813;
}

.panel-chain {
  width: 457px;
  flex: none;
}

.chain-head {
  height: 25px;
  flex: none;
  padding: 0 5px 2px 6px;
  display: flex;
  align-items: center;
  justify-content: space-between;
  font-size: 11.5px;
}

.chain-body {
  flex: 1;
  display: flex;
  background: #4c4f5a;
}

.chain-left {
  width: 389px;
  flex: none;
  display: flex;
  flex-direction: column;
}

.chain-tools {
  height: 38px;
  flex: none;
  padding: 4px 0 0 4px;
  display: flex;
  gap: 8px;
}

.apply {
  width: 84px;
  gap: 5px;
  color: #26272a;
}

.src {
  margin: -3px 0 0 7px;
  font-weight: 700;
  font-size: 14px;
  color: #6d7079;
}

.chain-list {
  flex: 1;
  margin: 0 0 3px 1px;
  padding: 1px 2px 0;
  background: #14161f;
  display: flex;
  flex-direction: column;
  gap: 1px;
}

.effect {
  height: 28px;
  flex: none;
  padding: 0 12px 0 6px;
  display: flex;
  align-items: center;
  background: #4d505a;
  color: #e4e4e6;
}

.grip {
  width: 6px;
  height: 14px;
  background: repeating-linear-gradient(#a9abb0 0 3px, transparent 3px 5px);
}

.fx-pow {
  width: 16px;
  height: 18px;
  margin-left: 8px;
  color: #d9b03c;
}

.fx-phones {
  width: 17px;
  height: 16px;
  margin-left: 6px;
  color: #e6e6e8;
}

.effect span {
  margin-left: 9px;
}

.fx-del {
  width: 12px;
  height: 14px;
  margin-left: auto;
  fill: #d33c3c;
}

.fx-add {
  width: 15px;
  height: 15px;
  margin-left: 9px;
  fill: #e6e6e8;
}

.effect-empty {
  height: 28px;
  flex: none;
  padding-right: 12px;
  display: flex;
  align-items: center;
  justify-content: flex-end;
}

.chain-right {
  flex: 1;
  display: flex;
  flex-direction: column;
  align-items: center;
  color: #d3d4d7;
}

.output-label {
  margin-top: 4px;
  font-size: 11px;
  line-height: 14px;
  text-align: center;
}

.fader {
  width: 16px;
  height: 127px;
  margin-top: 12px;
  display: flex;
  flex-direction: column;
}

.fader-off {
  height: 24px;
  background: #34363e;
}

.fader-knob {
  height: 24px;
  display: flex;
  align-items: center;
  justify-content: center;
  background: linear-gradient(#f0f0f1, #b9bbbe);
  border-radius: 2px;
}

.fader-knob i {
  width: 6px;
  height: 1px;
  background: #77797d;
}

.fader-on {
  flex: 1;
  background: #caa033;
}

.fader-value {
  width: 50px;
  height: 21px;
  margin-top: 13px;
  line-height: 21px;
  text-align: center;
  background: #d7d8d9;
  color: #4c4d50;
}

.panel-loud {
  flex: 1;
}

.tab-loud {
  width: 155px;
  padding-left: 24px;
}

.tab-spectrum {
  width: 166px;
  padding-left: 23px;
  margin-left: 2px;
}

.panel-loud .tabrow-dock {
  padding-left: 0;
}

.loudness {
  display: block;
  width: 652px;
  height: 214px;
  background: #14161f;
}

.loudness text {
  font-size: 10.5px;
  fill: #aeb0b4;
  text-anchor: middle;
}

/* Upgrade badge */
.upgrade {
  position: absolute;
  left: 1317px;
  top: 748px;
  width: 384px;
  height: 385px;
  border-radius: 50%;
  background: #cd1f5c;
  display: flex;
  flex-direction: column;
  align-items: center;
  padding-top: 49px;
}

.upgrade-icon {
  width: 130px;
  height: 130px;
}

.upgrade-text {
  margin-top: 12px;
  font-family: Inter, "Liberation Sans", sans-serif;
  font-weight: 800;
  font-size: 67px;
  line-height: 80px;
  letter-spacing: 1px;
  color: #fdf3f6;
}
```

FILE: script.js
```js
var seed = 7;
function rnd() {
  seed = (seed * 16807) % 2147483647;
  return seed / 2147483647;
}

// overview waveform, just noise shaped into short bursts
var upper = [];
var lower = [];
var x = 32;
while (x < 1447) {
  var len = 14 + rnd() * 40;
  var base = 8 + rnd() * 5;
  for (var i = 0; i < len && x < 1447; i += 1) {
    var edge = Math.min(1, Math.min(i, len - i) / 3);
    var amp = base * edge * (0.6 + rnd() * 0.5);
    if (rnd() > 0.97) amp = 15 + rnd() * 3;
    upper.push([x, 150 - amp]);
    lower.push([x, 150 + amp]);
    x += 1;
  }
  x += 1 + rnd() * 3;
}

var d = 'M' + upper.concat(lower.reverse()).map(function (p) {
  return p[0].toFixed(1) + ' ' + p[1].toFixed(1);
}).join('L') + 'Z';
document.getElementById('overview-wave').setAttribute('d', d);

// roughen the main wave outline, pull points in towards the centre line
var CENTRE = 433;
document.querySelectorAll('.wave polygon').forEach(function (poly) {
  var pts = poly.getAttribute('points').split(' ').map(function (s) {
    return s.split(',').map(Number);
  });
  var out = [];
  pts.forEach(function (p, n) {
    var q = pts[(n + 1) % pts.length];
    out.push(p.join(','));
    var steps = Math.floor(Math.abs(q[0] - p[0]) / 5);
    for (var k = 1; k < steps; k++) {
      var t = k / steps;
      var px = p[0] + (q[0] - p[0]) * t;
      var py = p[1] + (q[1] - p[1]) * t;
      py += (CENTRE - py) * rnd() * 0.28;
      out.push(px.toFixed(1) + ',' + py.toFixed(1));
    }
  });
  poly.setAttribute('points', out.join(' '));
});
```
